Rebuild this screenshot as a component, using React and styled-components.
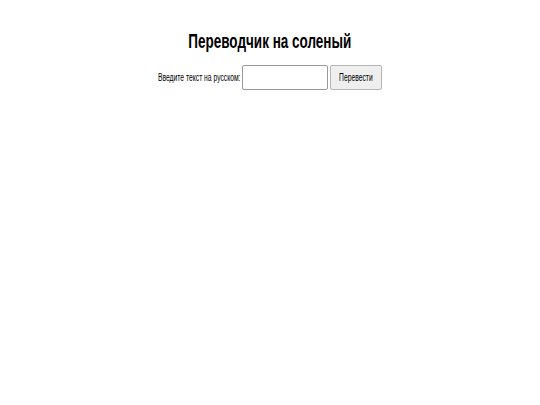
import React from 'react';
import styled, { createGlobalStyle } from 'styled-components';

const GlobalStyle = createGlobalStyle`
    body {
        margin: 0;
        background: #ffffff;
        font-family: "Liberation Sans", Arial, sans-serif;
    }
`;

const Page = styled.div`
    display: flex;
    flex-direction: column;
    align-items: center;
    padding-top: 30px;
`;

const Title = styled.h1`
    margin: 0 0 12px 0;
    font-size: 20px;
    font-weight: bold;
    color: #000;
    white-space: nowrap;
`;

// the screenshot's type is set very condensed
const Squeeze = styled.span`
    display: inline-block;
    white-space: nowrap;
    transform: scaleX(0.675);
    transform-origin: ${(p) => (p.$left ? 'left center' : 'center')};
`;

const Form = styled.form`
    display: flex;
    align-items: center;
    margin-right: 1px;
`;

const Label = styled.label`
    width: 84px;
    font-size: 10px;
    color: #000;
`;

const Input = styled.input`
    width: 86px;
    height: 25px;
    box-sizing: border-box;
    border: 1px solid #9a9a9a;
    border-radius: 2px;
    margin: 0 2px 0 0;
    padding: 0 3px;
`;

const Button = styled.button`
    height: 25px;
    width: 52px;
    box-sizing: border-box;
    padding: 0;
    font-family: inherit;
    font-size: 10px;
    background: #efefef;
    border: 1px solid #b5b5b5;
    border-radius: 2px;
    color: #000;
`;

function App() {
    return (
        <Page>
            <GlobalStyle />
            <Title><Squeeze>Переводчик на соленый</Squeeze></Title>
            <Form onSubmit={(e) => e.preventDefault()}>
                <Label htmlFor="ru"><Squeeze $left>Введите текст на русском:</Squeeze></Label>
                <Input id="ru" type="text" />
                <Button type="submit"><Squeeze>Перевести</Squeeze></Button>
            </Form>
        </Page>
    );
}

export default App;
